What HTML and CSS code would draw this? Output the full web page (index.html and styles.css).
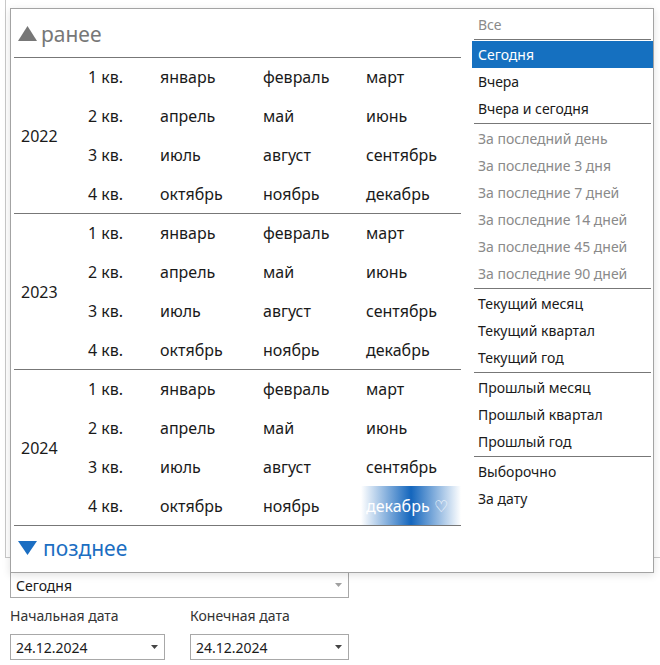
FILE: index.html
```html
<!DOCTYPE html>
<html lang="ru">
<head>
    <meta charset="UTF-8">
    <title>Период</title>
    <link rel="stylesheet" href="styles.css">
</head>
<body>
    <div class="frame"></div>

    <div class="combo wide">
        <span>Сегодня</span>
        <svg class="arrow light" width="7" height="4" viewBox="0 0 7 4"><path d="M0 0H7L3.5 4Z"/></svg>
    </div>

    <div class="dates">
        <div class="field">
            <div class="label">Начальная дата</div>
            <div class="combo start">
                <span>24.12.2024</span>
                <svg class="arrow" width="7" height="4" viewBox="0 0 7 4"><path d="M0 0H7L3.5 4Z"/></svg>
            </div>
        </div>
        <div class="field">
            <div class="label">Конечная дата</div>
            <div class="combo end">
                <span>24.12.2024</span>
                <svg class="arrow" width="7" height="4" viewBox="0 0 7 4"><path d="M0 0H7L3.5 4Z"/></svg>
            </div>
        </div>
    </div>

    <div class="popup">
        <div class="calendar">
            <div class="nav earlier">
                <svg width="19" height="15" viewBox="0 0 19 15"><path d="M9.5 0L19 15H0Z"/></svg>
                <span>ранее</span>
            </div>

            <div class="year-block">
                <div class="year">2022</div>
                <div class="q">1 кв.</div><div class="m">январь</div><div class="m">февраль</div><div class="m">март</div>
                <div class="q">2 кв.</div><div class="m">апрель</div><div class="m">май</div><div class="m">июнь</div>
                <div class="q">3 кв.</div><div class="m">июль</div><div class="m">август</div><div class="m">сентябрь</div>
                <div class="q">4 кв.</div><div class="m">октябрь</div><div class="m">ноябрь</div><div class="m">декабрь</div>
            </div>
            <div class="year-block">
                <div class="year">2023</div>
                <div class="q">1 кв.</div><div class="m">январь</div><div class="m">февраль</div><div class="m">март</div>
                <div class="q">2 кв.</div><div class="m">апрель</div><div class="m">май</div><div class="m">июнь</div>
                <div class="q">3 кв.</div><div class="m">июль</div><div class="m">август</div><div class="m">сентябрь</div>
                <div class="q">4 кв.</div><div class="m">октябрь</div><div class="m">ноябрь</div><div class="m">декабрь</div>
            </div>
            <div class="year-block">
                <div class="year">2024</div>
                <div class="q">1 кв.</div><div class="m">январь</div><div class="m">февраль</div><div class="m">март</div>
                <div class="q">2 кв.</div><div class="m">апрель</div><div class="m">май</div><div class="m">июнь</div>
                <div class="q">3 кв.</div><div class="m">июль</div><div class="m">август</div><div class="m">сентябрь</div>
                <div class="q">4 кв.</div><div class="m">октябрь</div><div class="m">ноябрь</div><div class="m current">декабрь ♡</div>
            </div>

            <div class="nav later">
                <svg width="19" height="14" viewBox="0 0 19 14"><path d="M0 0H19L9.5 14Z"/></svg>
                <span>позднее</span>
            </div>
        </div>

        <div class="periods">
            <div class="item all">Все</div>
            <div class="sep"></div>
            <div class="item selected">Сегодня</div>
            <div class="item">Вчера</div>
            <div class="item">Вчера и сегодня</div>
            <div class="sep"></div>
            <div class="item off">За последний день</div>
            <div class="item off">За последние 3 дня</div>
            <div class="item off">За последние 7 дней</div>
            <div class="item off">За последние 14 дней</div>
            <div class="item off">За последние 45 дней</div>
            <div class="item off">За последние 90 дней</div>
            <div class="sep"></div>
            <div class="item">Текущий месяц</div>
            <div class="item">Текущий квартал</div>
            <div class="item">Текущий год</div>
            <div class="sep"></div>
            <div class="item">Прошлый месяц</div>
            <div class="item">Прошлый квартал</div>
            <div class="item">Прошлый год</div>
            <div class="sep"></div>
            <div class="item">Выборочно</div>
            <div class="item">За дату</div>
        </div>
    </div>
</body>
</html>
```

FILE: styles.css
```css
body {
    margin: 0;
    font-family: "Noto Sans", "Open Sans", sans-serif;
    font-size: 14px;
    color: #1a1a1a;
    background: #fff;
    position: relative;
    width: 660px;
    height: 665px;
    overflow: hidden;
}

/* underlying form */
.frame {
    height: 559px;
    margin-left: 5px;
    margin-top: -1px;
    border-left: 1px solid #c8c8c8;
    border-bottom: 1px solid #c8c8c8;
    box-sizing: border-box;
}
.combo {
    display: flex;
    align-items: center;
    justify-content: space-between;
    height: 26px;
    box-sizing: border-box;
    border: 1px solid #a8a8a8;
    padding: 0 6px 0 5px;
    background: #fff;
}
.combo.wide {
    width: 339px;
    margin: 14px 0 0 10px;
}
.dates {
    display: flex;
    gap: 25px;
    margin-left: 10px;
}
.label {
    line-height: 20px;
    margin: 8px 0 8px;
    color: #333;
}
.combo.start { width: 155px; }
.combo.end { width: 159px; }
.arrow { fill: #444; }
.arrow.light { fill: #a0a0a0; }

/* dropdown popup */
.popup {
    position: absolute;
    left: 10px;
    top: 8px;
    width: 644px;
    height: 565px;
    box-sizing: border-box;
    border: 1px solid #a3a3a3;
    background: #fff;
    box-shadow: 0 2px 8px rgba(0, 0, 0, 0.12);
    display: flex;
}
.calendar {
    width: 447px;
    margin-left: 3px;
}
.nav {
    display: flex;
    align-items: center;
    font-size: 21px;
    padding-left: 4px;
}
.nav svg { margin-right: 4px; }
.earlier {
    height: 49px;
    border-bottom: 1px solid #777;
    color: #777;
    fill: #777;
    padding-top: 1px;
    box-sizing: border-box;
}
.later {
    height: 44px;
    color: #1b6ec2;
    fill: #1b6ec2;
}
.later svg { margin-right: 6px; }
.year-block {
    display: grid;
    grid-template-columns: 69px 72px 103px 103px 100px;
    grid-template-rows: repeat(4, 1fr);
    height: 156px;
    border-bottom: 1px solid #777;
    box-sizing: border-box;
    font-size: 16px;
    color: #1a1a1a;
}
.year {
    grid-row: 1 / 5;
    align-self: center;
    padding-left: 7px;
}
.q, .m {
    display: flex;
    align-items: center;
    padding-left: 5px;
}
.m.current {
    color: #fff;
    background: linear-gradient(to right, #fff 0%, #1466bd 50%, #fff 100%);
}
.periods {
    width: 181px;
    margin-left: 11px;
}
.item {
    height: 27px;
    line-height: 27px;
    padding-left: 6px;
    white-space: nowrap;
}
.item.all {
    height: 29px;
    line-height: 31px;
    color: #8a8a8a;
}
.item.off { color: #8a8a8a; }
.item.selected {
    background: #1570c0;
    color: #fff;
}
.sep {
    height: 1px;
    background: #777;
    margin: 1px 2px;
}
```
